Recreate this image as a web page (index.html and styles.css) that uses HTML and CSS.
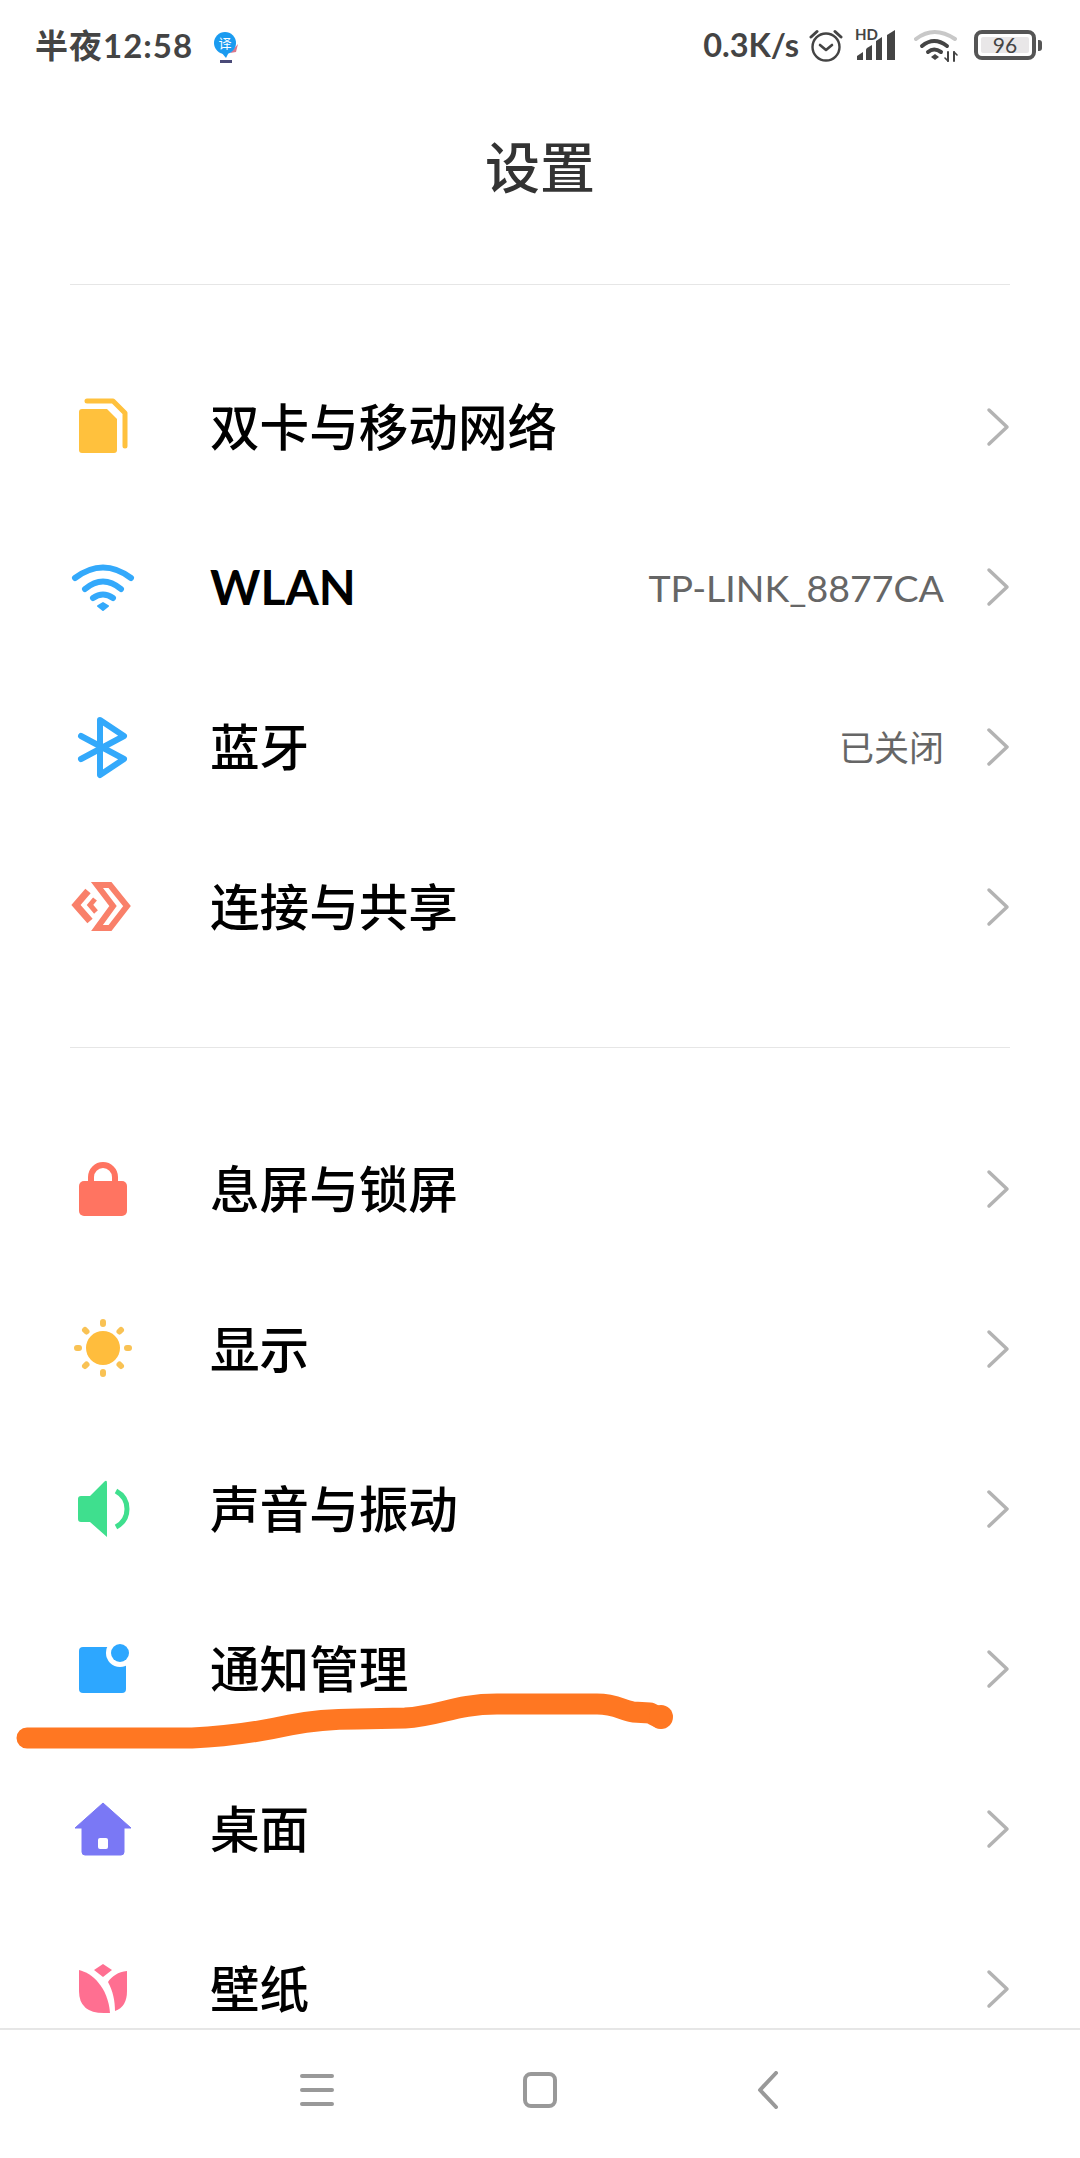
FILE: index.html
```html
<!DOCTYPE html>
<html lang="zh-CN">
<head>
  <meta charset="UTF-8">
  <meta name="viewport" content="width=device-width, initial-scale=1.0">
  <title>设置</title>
  <link rel="stylesheet" href="styles.css">
</head>
<body>
  <div class="phone">
    <div class="statusBar">
      <div class="statusLeft">
        <span class="clock">半夜12:58</span>
        <svg class="appIcon" width="26" height="32" viewBox="0 0 26 32">
          <path d="M25 12 L23 20 L17 21 Z" fill="#d9778d"/>
          <circle cx="12" cy="11" r="11" fill="#1a9bf0"/>
          <path d="M8 20 L13 26 L16 20 Z" fill="#1a9bf0"/>
          <rect x="7" y="28" width="12" height="3" fill="#4a4a78"/>
          <text class="appIconText" x="12" y="16">译</text>
        </svg>
      </div>
      <div class="statusRight">
        <span class="speed">0.3K/s</span>
        <svg class="alarm" width="34" height="34" viewBox="0 0 34 34" fill="none" stroke="#444">
          <circle cx="17" cy="19" r="13.5" stroke-width="2.4"/>
          <path d="M11 17 L17 22 L23 17" stroke-width="2.6" stroke-linecap="round" stroke-linejoin="round"/>
          <path d="M2 9 L8 3.5 M32 9 L26 3.5" stroke-width="3" stroke-linecap="round"/>
        </svg>
        <span class="signal">
          <span class="hd">HD</span>
          <svg width="42" height="30" viewBox="0 0 42 30" fill="#444">
            <path d="M1 30 V26 L7 22 V30 Z"/>
            <path d="M10 30 V20 Q10 19 11 18 L16 15 V30 Z"/>
            <path d="M20 30 V11 L26 7 V30 Z"/>
            <path d="M31 30 V5 L39 0 V30 Z"/>
          </svg>
        </span>
        <svg class="wifiState" width="44" height="34" viewBox="0 0 44 34" fill="none" stroke-linecap="round">
          <path d="M2 11 Q20 -3 41 11" stroke="#c8c8c8" stroke-width="4"/>
          <path d="M8 18 Q20 8 33 18" stroke="#444" stroke-width="4"/>
          <path d="M14 24 Q20 19 27 24" stroke="#444" stroke-width="4"/>
          <path d="M17 29 L21 26 L25 29 L21 32 Z" fill="#444"/>
          <path d="M34 24 V33 M40 24 V33" stroke="#444" stroke-width="2"/>
          <path d="M31 30 L34 33 M43 27 L40 24" stroke="#444" stroke-width="1.6"/>
        </svg>
        <span class="battery">
          <span class="batteryBody"><span class="batteryLevel">96</span></span>
          <span class="batteryTip"></span>
        </span>
      </div>
    </div>

    <div class="pageTitle"><h1>设置</h1></div>

    <div class="content">
      <div class="group groupFirst">
        <div class="row">
          <span class="rowIcon">
            <svg width="70" height="70" viewBox="0 0 70 70">
              <path d="M19 8 H45 L57 20 V53" fill="none" stroke="#ffc13d" stroke-width="5" stroke-linecap="round" stroke-linejoin="round"/>
              <path d="M14 16 H39 L49 26 V57 a3 3 0 0 1-3 3 H14 a3 3 0 0 1-3-3 V19 a3 3 0 0 1 3-3 Z" fill="#ffc13d"/>
            </svg>
          </span>
          <span class="rowLabel">双卡与移动网络</span>
          <svg class="chevron" width="24" height="40" viewBox="0 0 24 40"><path d="M3 3 L21 20 L3 37"/></svg>
        </div>
        <div class="row">
          <span class="rowIcon">
            <svg width="70" height="70" viewBox="0 0 70 70" fill="none" stroke="#33a9fb" stroke-width="6" stroke-linecap="round">
              <path d="M7 25 Q35 4 63 25"/>
              <path d="M17 36 Q35 21 53 36"/>
              <path d="M25 45 Q35 38 45 45"/>
              <path d="M30 53 L35 50 L40 53 L35 57 Z" fill="#33a9fb" stroke-width="2" stroke-linejoin="round"/>
            </svg>
          </span>
          <span class="rowLabel rowLabelLatin">WLAN</span>
          <span class="rowValue rowValueLatin">TP-LINK_8877CA</span>
          <svg class="chevron" width="24" height="40" viewBox="0 0 24 40"><path d="M3 3 L21 20 L3 37"/></svg>
        </div>
        <div class="row">
          <span class="rowIcon">
            <svg width="70" height="70" viewBox="0 0 70 70" fill="none" stroke="#33a9fb" stroke-width="6" stroke-linecap="round" stroke-linejoin="round">
              <path d="M13 23 L56 46 L32 62 V7 L56 23 L13 46"/>
            </svg>
          </span>
          <span class="rowLabel">蓝牙</span>
          <span class="rowValue">已关闭</span>
          <svg class="chevron" width="24" height="40" viewBox="0 0 24 40"><path d="M3 3 L21 20 L3 37"/></svg>
        </div>
        <div class="row">
          <span class="rowIcon">
            <svg width="70" height="70" viewBox="0 0 70 70" fill="none" stroke="#f9806a" stroke-width="6">
              <path d="M29 12 H42 L59 33 L42 55 H29 L45 33 Z"/>
              <path d="M20 18 L8 32 L22 48" stroke-width="7"/>
              <path d="M27 26 L22 32 L28 39" stroke-width="5"/>
            </svg>
          </span>
          <span class="rowLabel">连接与共享</span>
          <svg class="chevron" width="24" height="40" viewBox="0 0 24 40"><path d="M3 3 L21 20 L3 37"/></svg>
        </div>
      </div>

      <div class="divider"></div>

      <div class="group groupSecond">
        <div class="row">
          <span class="rowIcon">
            <svg width="70" height="70" viewBox="0 0 70 70">
              <path d="M23 28 V22 a12 12 0 0 1 24 0 V28" fill="none" stroke="#ff7461" stroke-width="6"/>
              <rect x="11" y="26" width="48" height="35" rx="5" fill="#ff7461"/>
            </svg>
          </span>
          <span class="rowLabel">息屏与锁屏</span>
          <svg class="chevron" width="24" height="40" viewBox="0 0 24 40"><path d="M3 3 L21 20 L3 37"/></svg>
        </div>
        <div class="row">
          <span class="rowIcon">
            <svg width="70" height="70" viewBox="0 0 70 70">
              <circle cx="35" cy="33" r="17" fill="#ffbd3d"/>
              <path d="M35 7 V9 M35 57 V59 M9 33 H11 M59 33 H61 M17 15 L18.500 16.500 M51.500 49.500 L53 51 M17 51 L18.500 49.500 M51.500 16.500 L53 15" stroke="#f9c254" stroke-width="6" stroke-linecap="round"/>
            </svg>
          </span>
          <span class="rowLabel">显示</span>
          <svg class="chevron" width="24" height="40" viewBox="0 0 24 40"><path d="M3 3 L21 20 L3 37"/></svg>
        </div>
        <div class="row">
          <span class="rowIcon">
            <svg width="70" height="70" viewBox="0 0 70 70">
              <path d="M13 21 H22 L36 7 Q39 4 39 8 V62 L22 47 H13 Q10 47 10 44 V24 Q10 21 13 21 Z" fill="#3fdf8e"/>
              <path d="M48 16 Q59 22 59 34 Q59 46 48 52" fill="none" stroke="#3fdf8e" stroke-width="5"/>
            </svg>
          </span>
          <span class="rowLabel">声音与振动</span>
          <svg class="chevron" width="24" height="40" viewBox="0 0 24 40"><path d="M3 3 L21 20 L3 37"/></svg>
        </div>
        <div class="row">
          <span class="rowIcon">
            <svg width="70" height="70" viewBox="0 0 70 70">
              <rect x="11" y="12" width="47" height="46" rx="4" fill="#2da7ff"/>
              <circle cx="52" cy="18" r="14" fill="#fff"/>
              <circle cx="52" cy="18" r="9" fill="#2da7ff"/>
            </svg>
          </span>
          <span class="rowLabel">通知管理</span>
          <svg class="chevron" width="24" height="40" viewBox="0 0 24 40"><path d="M3 3 L21 20 L3 37"/></svg>
        </div>
        <div class="row">
          <span class="rowIcon">
            <svg width="70" height="70" viewBox="0 0 70 70">
              <path d="M35 8 L63 33 H56 V57 a3 3 0 0 1-3 3 H17 a3 3 0 0 1-3-3 V33 H7 Z" fill="#7a78f5" stroke="#7a78f5" stroke-width="1" stroke-linejoin="round"/>
              <rect x="30" y="43" width="10" height="11" rx="2" fill="#fff"/>
            </svg>
          </span>
          <span class="rowLabel">桌面</span>
          <svg class="chevron" width="24" height="40" viewBox="0 0 24 40"><path d="M3 3 L21 20 L3 37"/></svg>
        </div>
        <div class="row">
          <span class="rowIcon">
            <svg width="70" height="70" viewBox="0 0 70 70" fill="#ff6f91">
              <path d="M35 9 L44 15 L35 22 L26 15 Z"/>
              <path d="M11 15 C24 18 40 32 42 58 H36 Q11 58 11 36 Z"/>
              <path d="M59 16 C50 17 44 21 40 27 C45 36 47 46 47 56 Q59 52 59 36 Z"/>
            </svg>
          </span>
          <span class="rowLabel">壁纸</span>
          <svg class="chevron" width="24" height="40" viewBox="0 0 24 40"><path d="M3 3 L21 20 L3 37"/></svg>
        </div>
      </div>
    </div>

    <div class="navBar">
      <svg class="navMenu" width="34" height="34" viewBox="0 0 34 34"><path d="M2 3 H32 M2 17 H32 M2 31 H32"/></svg>
      <svg class="navHome" width="34" height="36" viewBox="0 0 34 36"><rect x="2" y="2" width="30" height="32" rx="6"/></svg>
      <svg class="navBack" width="24" height="38" viewBox="0 0 24 38"><path d="M20 2 L4 19 L20 36"/></svg>
    </div>

    <!-- orange pen mark over the screenshot -->
    <svg class="penMark" width="1080" height="60" viewBox="0 1690 1080 60">
      <path d="M27 1738 H192 Q240 1736 290 1725 Q320 1719 357 1719 L405 1718 C440 1716 455 1704 497 1704 H597 C615 1704 622 1710 633 1712 L650 1713 L660 1718"/>
      <circle cx="661" cy="1717" r="12"/>
    </svg>
  </div>
</body>
</html>
```

FILE: styles.css
```css
*{
  box-sizing: border-box;
}
html,body{
  margin: 0;
  padding: 0;
  background-color: #fff;
}
body{
  font-family: "Noto Sans CJK SC", "Noto Sans", sans-serif;
}
.phone{
  position: relative;
  width: 1080px;
  height: 2158px;
  display: flex;
  flex-direction: column;
  overflow: hidden;
}

/* status bar */
.statusBar{
  height: 90px;
  flex: none;
  display: flex;
  justify-content: space-between;
  align-items: center;
  padding: 0 38px 0 35px;
  color: #444;
}
.statusLeft{
  display: flex;
  align-items: center;
}
.clock{
  font-family: Lato, "Noto Sans CJK SC", sans-serif;
  font-size: 33px;
  font-weight: 700;
  line-height: 36px;
  letter-spacing: 1px;
}
.appIcon{
  margin-left: 20px;
  margin-top: 6px;
}
.appIconText{
  font-size: 13px;
  fill: #fff;
  text-anchor: middle;
}
.statusRight{
  display: flex;
  align-items: center;
}
.speed{
  font-family: Lato, sans-serif;
  font-size: 32.5px;
  font-weight: 700;
  line-height: 36px;
}
.alarm{
  margin-left: 10px;
}
.signal{
  position: relative;
  width: 42px;
  height: 30px;
  margin-left: 13px;
  display: block;
}
.signal svg{
  display: block;
}
.hd{
  position: absolute;
  left: -1px;
  top: -3px;
  font-family: Lato, sans-serif;
  font-size: 15px;
  font-weight: 700;
  line-height: 14px;
}
.wifiState{
  margin-left: 16px;
}
.battery{
  display: flex;
  align-items: center;
  margin-left: 16px;
}
.batteryBody{
  width: 62px;
  height: 30px;
  border: 4px solid #555;
  border-radius: 8px;
  padding: 3px;
  display: flex;
}
.batteryLevel{
  flex: 1;
  background-color: #e9e7e8;
  border-radius: 2px;
  text-align: center;
  font-family: Lato, sans-serif;
  font-size: 21px;
  line-height: 16px;
  color: #444;
}
.batteryTip{
  width: 4px;
  height: 11px;
  margin-left: 2px;
  background-color: #555;
  border-radius: 0 3px 3px 0;
}

/* title */
.pageTitle{
  flex: none;
  height: 195px;
  margin: 0 70px;
  padding-top: 35px;
  border-bottom: 1px solid #e6e6e6;
  text-align: center;
}
.pageTitle h1{
  margin: 0;
  font-size: 55px;
  font-weight: 500;
  line-height: 78px;
  color: #333;
}

/* list */
.content{
  flex: 1;
  min-height: 0;
  overflow: hidden;
}
.groupFirst{
  margin-top: 63px;
}
.groupSecond{
  margin-top: 62px;
}
.divider{
  height: 1px;
  margin: 59px 70px 0;
  background-color: #e6e6e6;
}
.group{
  padding: 0 70px 0 68px;
}
.row{
  height: 160px;
  display: flex;
  align-items: center;
}
.rowIcon{
  width: 70px;
  height: 70px;
  flex: none;
}
.rowIcon svg{
  display: block;
}
.rowLabel{
  margin-left: 72px;
  margin-bottom: 9px;
  flex: 1;
  font-size: 49.6px;
  font-weight: 500;
  color: #000;
}
.rowLabelLatin{
  margin-bottom: 3px;
  font-family: Lato, sans-serif;
  font-size: 48px;
  font-weight: 700;
}
.rowValue{
  margin-right: 42px;
  margin-bottom: 5px;
  font-size: 35px;
  color: #666;
}
.rowValueLatin{
  margin-bottom: 2px;
  font-family: Lato, sans-serif;
  font-size: 37.5px;
}
.chevron{
  flex: none;
  margin: 0 0 3px;
}
.chevron path{
  fill: none;
  stroke: #b3b3b3;
  stroke-width: 3.500;
  stroke-linecap: round;
  stroke-linejoin: round;
}

/* nav bar */
.navBar{
  position: relative;
  flex: none;
  height: 130px;
  padding-bottom: 8px;
  background-color: #fff;
  border-top: 2px solid #e6e6e6;
  display: flex;
  justify-content: center;
  align-items: center;
  gap: 189px;
}
.navBack{
  margin-left: 10px;
}
.navBar path,.navBar rect{
  fill: none;
  stroke: #999;
  stroke-width: 4;
  stroke-linecap: round;
  stroke-linejoin: round;
}

.penMark{
  position: absolute;
  left: 0;
  top: 1690px;
}
.penMark path{
  fill: none;
  stroke: #ff7722;
  stroke-width: 21;
  stroke-linecap: round;
  stroke-linejoin: round;
}
.penMark circle{
  fill: #ff7722;
}
```
